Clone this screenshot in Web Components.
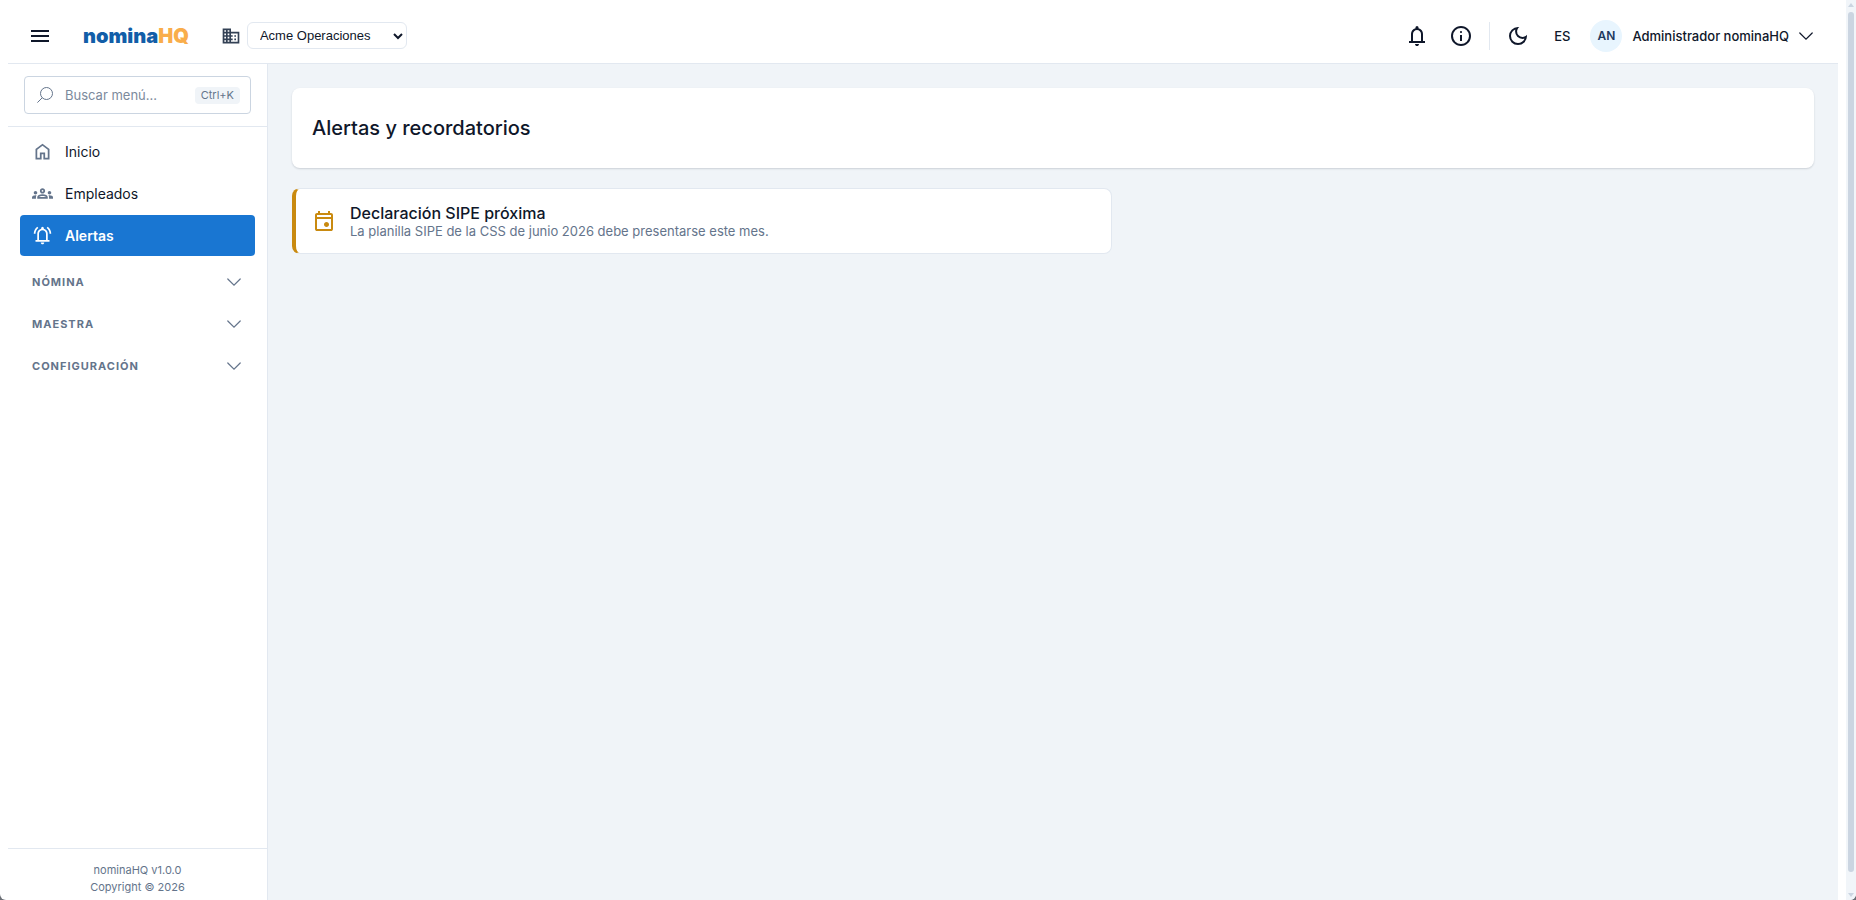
<!DOCTYPE html>
<html lang="es">
<head>
<meta charset="utf-8">
<title>nominaHQ</title>
<style>
  body {
    margin: 0;
    background: #6b6f76;
    color: #0f172a;
    font-family: Inter, "Noto Sans", sans-serif;
    font-size: 14px;
  }
</style>
</head>
<body>
<app-shell>
  <app-header slot="header" user="Administrador nominaHQ" initials="AN" lang-code="ES"></app-header>
  <side-nav slot="nav">
    <nav-item icon="home">Inicio</nav-item>
    <nav-item icon="groups">Empleados</nav-item>
    <nav-item icon="alerts" active>Alertas</nav-item>
    <nav-section>Nómina</nav-section>
    <nav-section>Maestra</nav-section>
    <nav-section>Configuración</nav-section>
    <span slot="footer">nominaHQ v1.0.0</span>
    <span slot="footer">Copyright © 2026</span>
  </side-nav>
  <page-title>Alertas y recordatorios</page-title>
  <alert-card>
    <span slot="title">Declaración SIPE próxima</span>
    La planilla SIPE de la CSS de junio 2026 debe presentarse este mes.
  </alert-card>
</app-shell>

<script>
const { customElements, HTMLElement } = window

const BELL = 'M160-200v-80h80v-280q0-83 50-147.5T420-792v-28q0-25 17.5-42.5T480-880q25 0 42.5 17.5T540-820v28q80 20 130 84.5T720-560v280h80v80H160Zm320 120q-33 0-56.5-23.5T400-160h160q0 33-23.5 56.5T480-80ZM320-280h320v-280q0-66-47-113t-113-47q-66 0-113 47t-47 113v280Z'

// [viewBox, markup]
const ICONS = {
  bell: ['0 -960 960 960', `<path d="${BELL}"/>`],
  alerts: ['0 -960 960 960', `<path d="${BELL}"/><path d="M80-560q0-100 44.5-183.5T244-882l47 64q-60 44-95.5 111T160-560H80Zm720 0q0-80-35.5-147T669-818l47-64q75 55 119.5 138.5T880-560h-80Z"/>`],
  info: ['0 -960 960 960', '<path d="M440-280h80v-240h-80v240Zm40-320q17 0 28.5-11.5T520-640q0-17-11.5-28.5T480-680q-17 0-28.5 11.5T440-640q0 17 11.5 28.5T480-600Zm0 520q-83 0-156-31.5T197-197q-54-54-85.5-127T80-480q0-83 31.5-156T197-763q54-54 127-85.5T480-880q83 0 156 31.5T763-763q54 54 85.5 127T880-480q0 83-31.5 156T763-197q-54 54-127 85.5T480-80Zm0-80q134 0 227-93t93-227q0-134-93-227t-227-93q-134 0-227 93t-93 227q0 134 93 227t227 93Z"/>'],
  moon: ['0 -960 960 960', '<path d="M480-120q-150 0-255-105T120-480q0-150 105-255t255-105q14 0 27.5 1t26.5 3q-41 29-65.5 75.5T444-660q0 90 63 153t153 63q55 0 101-24.5t75-65.5q2 13 3 26.5t1 27.5q0 150-105 255T480-120Zm0-80q88 0 158-48.5T740-375q-20 5-40 8t-40 3q-123 0-209.5-86.5T364-660q0-20 3-40t8-40q-78 32-126.5 102T200-480q0 116 82 198t198 82Z"/>'],
  menu: ['0 -960 960 960', '<path d="M120-240v-80h720v80H120Zm0-200v-80h720v80H120Zm0-200v-80h720v80H120Z"/>'],
  home: ['0 -960 960 960', '<path d="M240-200h120v-240h240v240h120v-360L480-740 240-560v360Zm-80 80v-480l320-240 320 240v480H520v-240h-80v240H160Z"/>'],
  event: ['0 -960 960 960', '<path d="M580-240q-42 0-71-29t-29-71q0-42 29-71t71-29q42 0 71 29t29 71q0 42-29 71t-71 29ZM200-80q-33 0-56.5-23.5T120-160v-560q0-33 23.5-56.5T200-800h40v-80h80v80h320v-80h80v80h40q33 0 56.5 23.5T840-720v560q0 33-23.5 56.5T760-80H200Zm0-80h560v-400H200v400Zm0-480h560v-80H200v80Z"/>'],
  domain: ['0 -960 960 960', '<path fill-rule="evenodd" d="M80-120v-720h400v160h400v560H80Zm80-80h80v-80h-80v80Zm0-160h80v-80h-80v80Zm0-160h80v-80h-80v80Zm0-160h80v-80h-80v80Zm160 480h80v-80h-80v80Zm0-160h80v-80h-80v80Zm0-160h80v-80h-80v80Zm0-160h80v-80h-80v80Zm160 480h320v-400H480v80h80v80h-80v80h80v80h-80v80Z"/><path d="M640-440v-80h80v80h-80Zm0 160v-80h80v80h-80Z"/>'],
  groups: ['0 0 24 24', '<path d="M4 13c1.1 0 2-.9 2-2s-.9-2-2-2-2 .9-2 2 .9 2 2 2zm1.13 1.1c-.37-.06-.74-.1-1.13-.1-.99 0-1.93.21-2.78.58C.48 14.9 0 15.62 0 16.43V18h4.5v-1.61c0-.83.23-1.61.63-2.29zM20 13c1.1 0 2-.9 2-2s-.9-2-2-2-2 .9-2 2 .9 2 2 2zm4 3.43c0-.81-.48-1.53-1.22-1.85-.85-.37-1.79-.58-2.78-.58-.39 0-.76.04-1.13.1.4.68.63 1.46.63 2.29V18H24v-1.57zm-7.76-2.78c-1.17-.52-2.61-.9-4.24-.9s-3.07.39-4.24.9C6.68 14.13 6 15.21 6 16.39V18h12v-1.61c0-1.18-.68-2.26-1.76-2.74zM8.07 16c.09-.23.13-.39.91-.69.97-.38 1.99-.56 3.02-.56s2.05.18 3.02.56c.77.3.81.46.91.69H8.07zM12 8c.55 0 1 .45 1 1s-.45 1-1 1-1-.45-1-1 .45-1 1-1m0-2c-1.66 0-3 1.34-3 3s1.34 3 3 3 3-1.34 3-3-1.34-3-3-3z"/>'],
  search: ['0 0 16 16', '<g fill="none" stroke="currentColor"><circle cx="9.5" cy="6.5" r="6"/><path d="M5.2 10.8.4 15.6"/></g>'],
  chevron: ['0 0 14 14', '<path fill="none" stroke="currentColor" stroke-width="1.2" stroke-linecap="round" d="m.8 4 6.2 6.2L13.2 4"/>'],
  select: ['0 0 10 10', '<path fill="none" stroke="currentColor" stroke-width="2" d="m1 3 4 4 4-4"/>'],
  up: ['0 0 6 6', '<path d="M3 1 6 5H0z"/>'],
  down: ['0 0 6 6', '<path d="M3 5 0 1h6z"/>']
}

function define (name, html, setup) {
  const template = document.createElement('template')
  template.innerHTML = html

  customElements.define(name, class extends HTMLElement {
    constructor () {
      super()
      this.attachShadow({mode: 'open'})
      this.shadowRoot.appendChild(template.content.cloneNode(true))
    }

    connectedCallback () {
      if (setup) setup(this, this.shadowRoot)
    }
  })
}

define('app-icon', `
  <style>
    :host {
      display: block;
      flex: none;
      width: 24px;
      height: 24px;
    }
    svg {
      display: block;
      width: 100%;
      height: 100%;
      fill: currentColor;
    }
  </style>
  <svg aria-hidden="true"></svg>
`, (host, root) => {
  const [viewBox, markup] = ICONS[host.getAttribute('name')]
  const svg = root.querySelector('svg')
  svg.setAttribute('viewBox', viewBox)
  svg.innerHTML = markup
})

define('app-shell', `
  <style>
    :host {
      display: grid;
      grid-template-columns: 1fr 10px;
      box-sizing: border-box;
      min-height: 100vh;
      background: #fff;
      border-radius: 0 0 6px 6px;
      overflow: hidden;
    }
    .page {
      display: grid;
      grid-template-columns: 260px 1fr;
      grid-template-rows: 56px 1fr;
      padding: 8px 8px 0;
    }
    .header {
      grid-column: 1 / -1;
      border-bottom: 1px solid #e2e8f0;
    }
    main {
      display: flex;
      flex-direction: column;
      gap: 20px;
      padding: 24px;
      background: #f0f4f8;
    }
    .nav {
      display: grid;
      grid-template-columns: minmax(0, 1fr);
    }
  </style>
  <div class="page">
    <div class="header"><slot name="header"></slot></div>
    <div class="nav"><slot name="nav"></slot></div>
    <main><slot></slot></main>
  </div>
  <scroll-rail></scroll-rail>
`)

define('scroll-rail', `
  <style>
    :host {
      display: flex;
      flex-direction: column;
      align-items: center;
      gap: 4px;
      padding: 2px 0;
      background: #f1f5f9;
      color: #cbd5e1;
    }
    .thumb {
      flex: 1;
      width: 6px;
      margin-bottom: 16px;
      border-radius: 3px;
      background: #cbd5e1;
    }
    app-icon {
      width: 6px;
      height: 6px;
    }
  </style>
  <app-icon name="up"></app-icon>
  <div class="thumb"></div>
  <app-icon name="down"></app-icon>
`)

define('brand-logo', `
  <style>
    :host {
      display: block;
      color: #125ea8;
      font-size: 20px;
      font-weight: 900;
      line-height: 24px;
    }
    span {
      color: #f9ad4b;
    }
  </style>
  nomina<span>HQ</span>
`)

define('app-header', `
  <style>
    :host {
      display: flex;
      align-items: center;
      height: 55px;
      padding: 0 25px 0 20px;
    }
    button {
      display: flex;
      align-items: center;
      padding: 0;
      border: 0;
      background: none;
      color: inherit;
      font: inherit;
      font-size: 13px;
      font-weight: 500;
    }
    brand-logo {
      margin: 0 32px 0 31px;
    }
    label {
      margin-right: 6px;
      color: #334155;
    }
    label app-icon {
      width: 20px;
      height: 20px;
    }
    .company {
      display: grid;
      align-items: center;
    }
    .company > * {
      grid-area: 1 / 1;
    }
    .company app-icon {
      width: 10px;
      height: 10px;
      margin-right: 4px;
      justify-self: end;
      pointer-events: none;
    }
    select {
      width: 160px;
      height: 27px;
      padding: 0 24px 0 12px;
      border: 1px solid #e2e8f0;
      border-radius: 6px;
      appearance: none;
      background: #fff;
      color: inherit;
      font-family: "Liberation Sans", Arial, sans-serif;
      font-size: 13px;
    }
    .actions {
      display: flex;
      align-items: center;
      gap: 20px;
      margin-left: auto;
    }
    .divider {
      width: 1px;
      height: 28px;
      margin: 0 -4px;
      background: #e2e8f0;
    }
    .lang {
      padding: 0 4px;
    }
    .user {
      gap: 10px;
      margin-left: -4px;
    }
    .avatar {
      width: 32px;
      border-radius: 50%;
      background: #e8f5fe;
      color: #1e3a5f;
      font-size: 12px;
      font-weight: 600;
      line-height: 32px;
      text-align: center;
    }
    .user app-icon {
      width: 14px;
      height: 14px;
    }
  </style>
  <button aria-label="Menú"><app-icon name="menu"></app-icon></button>
  <brand-logo></brand-logo>
  <label for="company" aria-label="Empresa"><app-icon name="domain"></app-icon></label>
  <div class="company">
    <select id="company"><option>Acme Operaciones</option></select>
    <app-icon name="select"></app-icon>
  </div>
  <div class="actions">
    <button aria-label="Notificaciones"><app-icon name="bell"></app-icon></button>
    <button aria-label="Información"><app-icon name="info"></app-icon></button>
    <span class="divider"></span>
    <button aria-label="Modo oscuro"><app-icon name="moon"></app-icon></button>
    <button class="lang"></button>
    <button class="user">
      <span class="avatar"></span>
      <span class="name"></span>
      <app-icon name="chevron"></app-icon>
    </button>
  </div>
`, (host, root) => {
  root.querySelector('.lang').textContent = host.getAttribute('lang-code')
  root.querySelector('.avatar').textContent = host.getAttribute('initials')
  root.querySelector('.name').textContent = host.getAttribute('user')
})

define('menu-search', `
  <style>
    :host {
      display: flex;
      align-items: center;
      box-sizing: border-box;
      height: 38px;
      padding: 0 10px 0 12px;
      border: 1px solid #cbd5e1;
      border-radius: 4px;
      color: #64748b;
    }
    app-icon {
      width: 16px;
      height: 16px;
    }
    input {
      flex: 1;
      min-width: 0;
      padding: 0 0 0 12px;
      border: 0;
      outline: 0;
      background: none;
      color: inherit;
      font: inherit;
      font-size: 13px;
    }
    input::placeholder {
      color: #7c8a9c;
    }
    kbd {
      padding: 0 6px;
      border-radius: 4px;
      background: #f0f4f8;
      font-family: inherit;
      font-size: 11px;
      line-height: 17px;
    }
  </style>
  <label for="search" aria-label="Buscar menú"><app-icon name="search"></app-icon></label>
  <input id="search" type="text" placeholder="Buscar menú...">
  <kbd>Ctrl+K</kbd>
`)

define('side-nav', `
  <style>
    :host {
      display: flex;
      flex-direction: column;
      border-right: 1px solid #e2e8f0;
    }
    .search {
      padding: 12px 16px;
      border-bottom: 1px solid #e2e8f0;
    }
    nav {
      display: flex;
      flex: 1;
      flex-direction: column;
      gap: 1px;
      padding: 4px 12px;
    }
    footer {
      display: flex;
      flex-direction: column;
      align-items: center;
      padding: 13px 0 4px;
      border-top: 1px solid #e2e8f0;
      color: #64748b;
      font-size: 11px;
      line-height: 17px;
    }
  </style>
  <div class="search"><menu-search></menu-search></div>
  <nav><slot></slot></nav>
  <footer><slot name="footer"></slot></footer>
`)

define('nav-item', `
  <style>
    :host {
      display: block;
    }
    a {
      display: flex;
      align-items: center;
      gap: 12px;
      height: 41px;
      padding: 0 12px;
      border-radius: 4px;
      color: inherit;
      text-decoration: none;
    }
    app-icon {
      width: 21px;
      height: 21px;
      color: #64748b;
    }
    :host([active]) a {
      background: #1976d2;
      color: #fff;
      font-weight: 600;
    }
    :host([active]) app-icon {
      color: inherit;
    }
  </style>
  <a href="#"><slot></slot></a>
`, (host, root) => {
  const icon = document.createElement('app-icon')
  icon.setAttribute('name', host.getAttribute('icon'))
  root.querySelector('a').prepend(icon)
})

define('nav-section', `
  <style>
    :host {
      display: block;
    }
    button {
      display: flex;
      align-items: center;
      justify-content: space-between;
      width: 100%;
      height: 41px;
      padding: 9px 14px 0 12px;
      border: 0;
      background: none;
      color: #64748b;
      font: inherit;
      font-size: 11px;
      font-weight: 700;
      letter-spacing: 1px;
      text-transform: uppercase;
    }
    app-icon {
      width: 14px;
      height: 14px;
    }
  </style>
  <button aria-expanded="false"><slot></slot><app-icon name="chevron"></app-icon></button>
`)

define('page-title', `
  <style>
    :host {
      display: block;
      padding: 24px 20px;
      border-radius: 8px;
      background: #fff;
      box-shadow: 0 1px 2px rgba(15, 23, 42, .16);
    }
    h1 {
      margin: 0;
      font-size: 20px;
      font-weight: 500;
      line-height: 32px;
    }
  </style>
  <h1><slot></slot></h1>
`)

define('alert-card', `
  <style>
    :host {
      display: flex;
      align-items: center;
      gap: 14px;
      box-sizing: border-box;
      max-width: 820px;
      padding: 14px 16px;
      border: 1px solid #e2e8f0;
      border-left: 4px solid #c98a10;
      border-radius: 8px;
      background: #fff;
      color: #64748b;
      font-size: 13px;
      line-height: 16px;
    }
    app-icon {
      color: #c98a10;
    }
    h2 {
      margin: 0;
      color: #0f172a;
      font-size: 16px;
      font-weight: 500;
      line-height: 20px;
    }
  </style>
  <app-icon name="event"></app-icon>
  <div>
    <h2><slot name="title"></slot></h2>
    <slot></slot>
  </div>
`)
</script>
</body>
</html>
